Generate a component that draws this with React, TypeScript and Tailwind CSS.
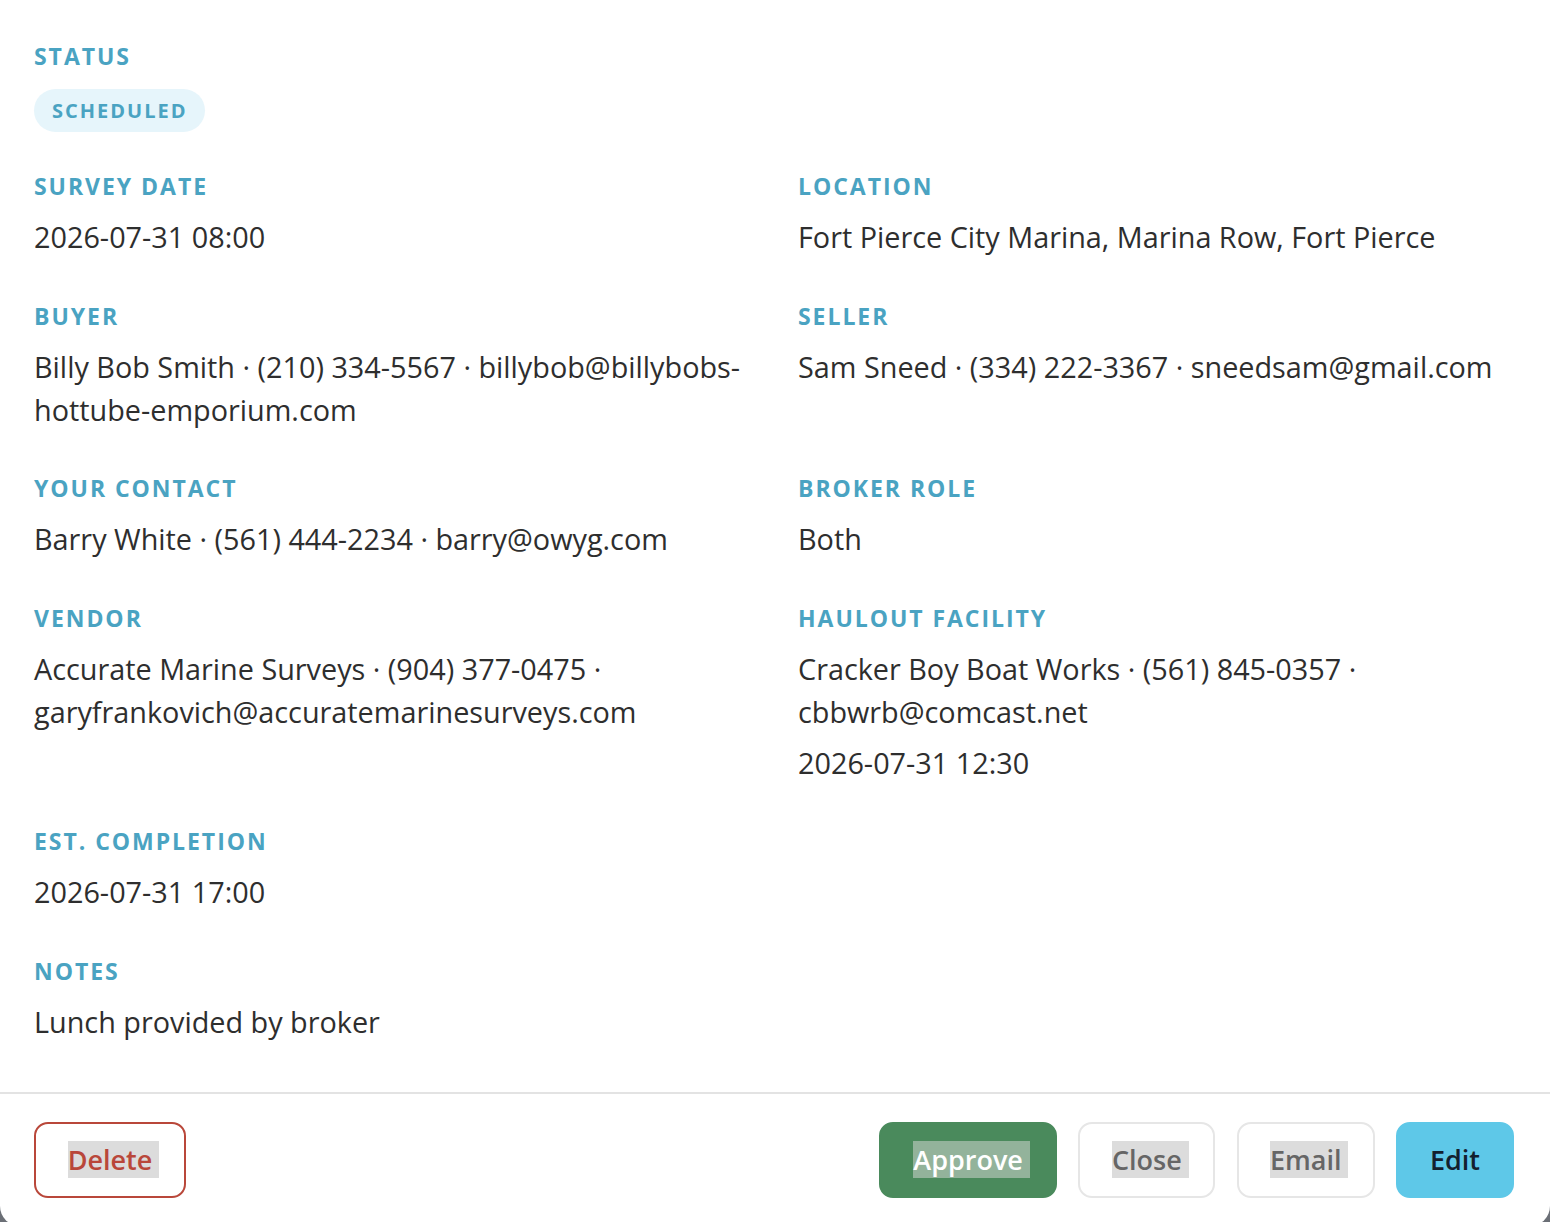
import React from 'react'

const font = { fontFamily: '"Open Sans", "Noto Sans", sans-serif' }

function Label({ children }: { children: React.ReactNode }) {
  return (
    <div className="text-[23px] leading-[32px] font-bold uppercase tracking-[0.085em] text-[#4aa3c2]">
      {children}
    </div>
  )
}

function Field({ label, children }: { label: string; children?: React.ReactNode }) {
  return (
    <div>
      <Label>{label}</Label>
      <div className="mt-[13px] text-[28.8px] leading-[43px] text-[#2e2e2e]">{children}</div>
    </div>
  )
}

function Btn({
  children,
  className,
  mark,
}: {
  children: string
  className: string
  mark?: string
}) {
  return (
    <button
      className={
        'h-[76px] rounded-[14px] border-2 text-[27px] leading-[37px] font-semibold flex items-center justify-center ' +
        className
      }
    >
      <span className={mark ? 'pr-[7px] -mr-[7px] ' + mark : ''}>{children}</span>
    </button>
  )
}

export default function App() {
  return (
    <div className="h-[1222px] overflow-hidden bg-[#6b6f76]" style={font}>
      <div className="bg-white rounded-b-[20px]">
        <div className="pl-[34px] pr-[36px] pt-[40px] pb-[49px] flex flex-col">
          {/* Status */}
          <div>
            <Label>Status</Label>
            <div className="mt-[17px] inline-flex h-[43px] items-center rounded-full bg-[#e6f5fb] pl-[18px] pr-[17px] text-[20px] font-bold uppercase tracking-[0.1em] text-[#4aa3c2]">
              Scheduled
            </div>
          </div>

          <div className="mt-[38px] grid grid-cols-2 gap-x-[48px] gap-y-[41.6px]">
            <Field label="Survey Date">2026-07-31 08:00</Field>
            <Field label="Location">Fort Pierce City Marina, Marina Row, Fort Pierce</Field>
            <Field label="Buyer">Billy Bob Smith · (210) 334-5567 · billybob@billybobs-hottube-emporium.com</Field>
            <Field label="Seller">Sam Sneed · (334) 222-3367 · sneedsam@gmail.com</Field>
            <Field label="Your Contact">Barry White · (561) 444-2234 · barry@owyg.com</Field>
            <Field label="Broker Role">Both</Field>
            <Field label="Vendor">
              Accurate Marine Surveys · (904) 377-0475 · garyfrankovich@accuratemarinesurveys.com
            </Field>
            <Field label="Haulout Facility">
              <div>Cracker Boy Boat Works · (561) 845-0357 · cbbwrb@comcast.net</div>
              <div className="mt-[8px]">2026-07-31 12:30</div>
            </Field>
            <Field label="Est. Completion">2026-07-31 17:00</Field>
            <div />
            <Field label="Notes">Lunch provided by broker</Field>
            <div />
          </div>
        </div>

        <div className="border-t-2 border-[#e3e3e3] pl-[34px] pr-[36px] pt-[28px] pb-[28px] flex items-center">
          <Btn className="w-[152px] border-[#b9473a] text-[#b9473a] bg-white" mark="bg-[#dcdcdc]">
            Delete
          </Btn>
          <div className="ml-auto flex gap-[21.3px]">
            <Btn className="w-[178px] border-[#4a8a5c] bg-[#4a8a5c] text-white" mark="bg-[#93b39b]">
              Approve
            </Btn>
            <Btn className="w-[137px] border-[#e6e6e6] bg-white text-[#666666]" mark="bg-[#dcdcdc]">
              Close
            </Btn>
            <Btn className="w-[138px] border-[#e6e6e6] bg-white text-[#666666]" mark="bg-[#dcdcdc]">
              Email
            </Btn>
            <Btn className="w-[118px] border-[#5ec8e8] bg-[#5ec8e8] text-[#13202e]">Edit</Btn>
          </div>
        </div>
      </div>
    </div>
  )
}
